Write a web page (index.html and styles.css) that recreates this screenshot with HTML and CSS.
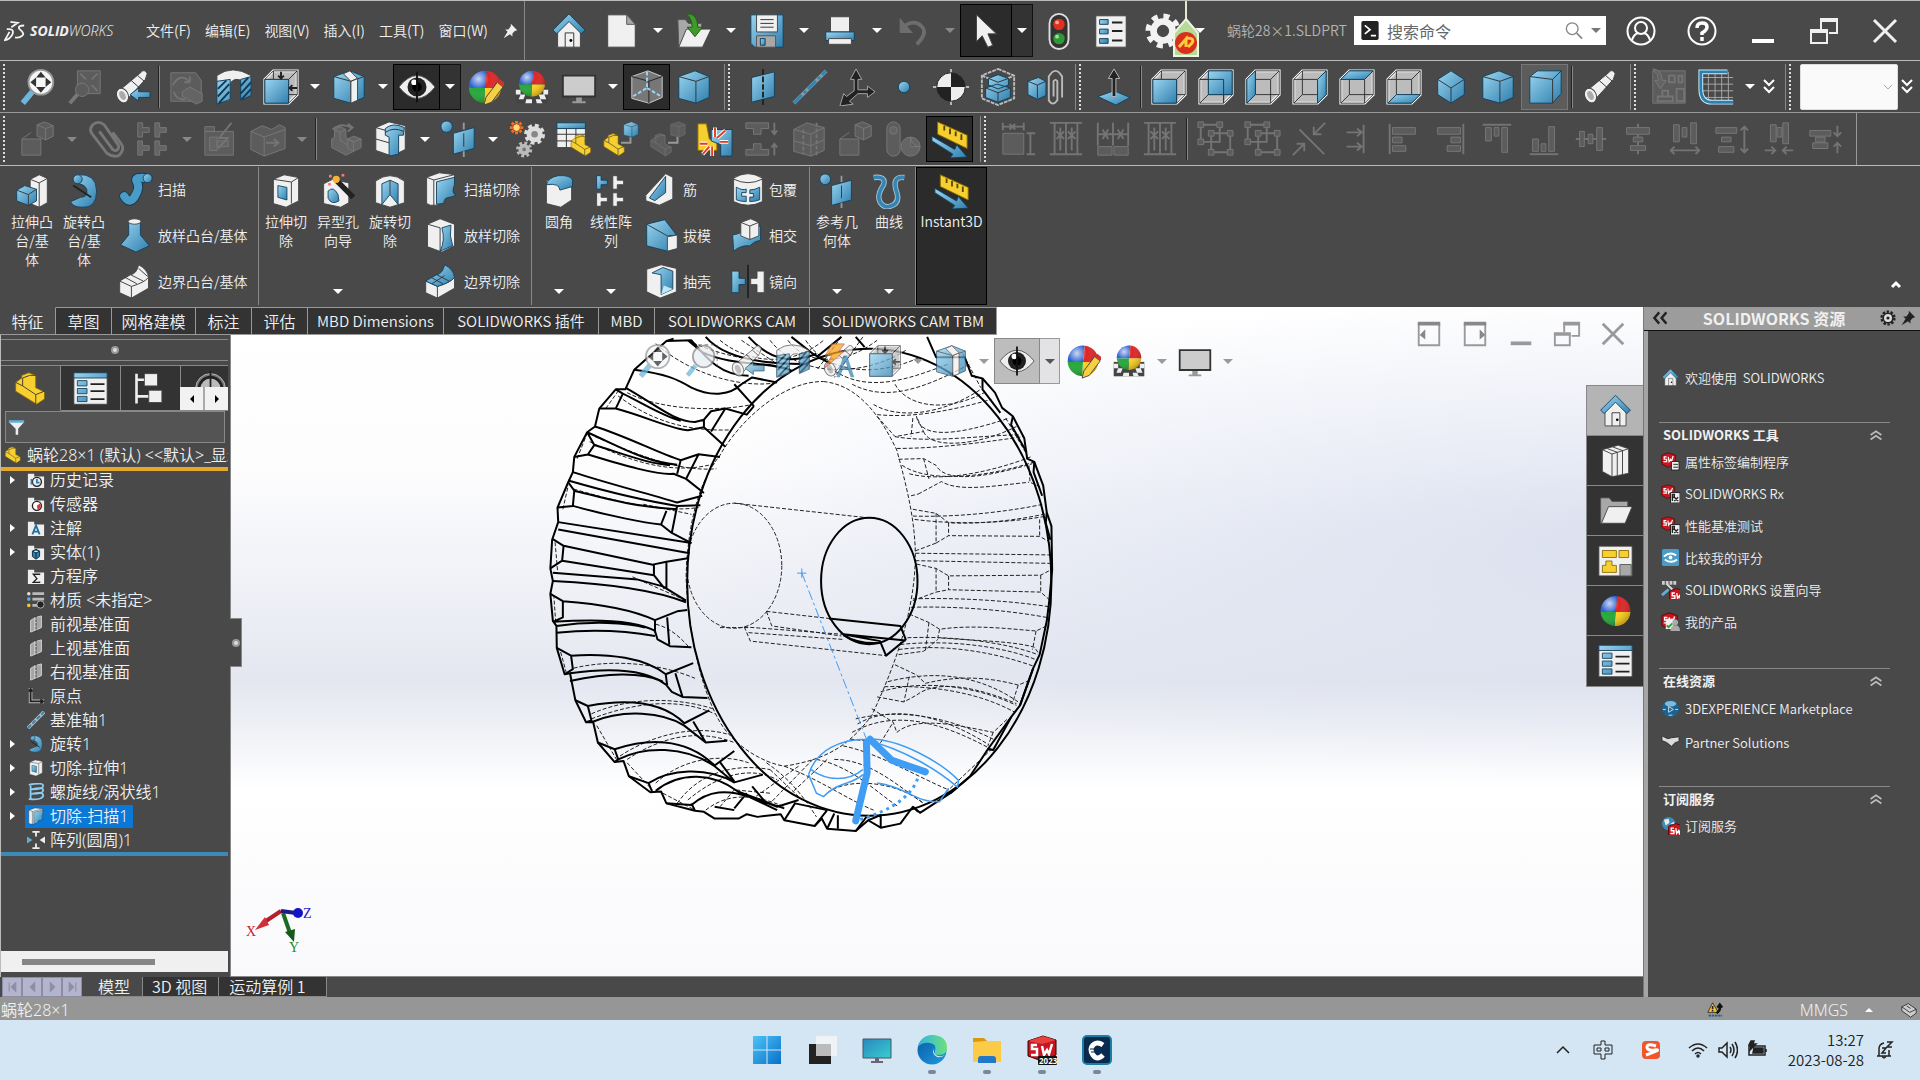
FILE: index.html
```html
<!DOCTYPE html>
<html lang="zh-CN">
<head>
<meta charset="utf-8">
<title>SOLIDWORKS</title>
<link rel="stylesheet" href="styles.css">
</head>
<body>
<svg class="defs" aria-hidden="true">
<defs>
<linearGradient id="gb" x1="0" y1="0" x2="1" y2="1"><stop offset="0" stop-color="#9bd5f0"/><stop offset="1" stop-color="#2f7fae"/></linearGradient>
<linearGradient id="edge" x1="0" y1="0" x2="1" y2="1"><stop offset="0" stop-color="#0c59a4"/><stop offset="1" stop-color="#1b9de2"/></linearGradient>
<linearGradient id="edge2" x1="0" y1="0" x2="1" y2="0"><stop offset="0" stop-color="#2fb5e8"/><stop offset="1" stop-color="#6be07b"/></linearGradient>
<linearGradient id="win" x1="0" y1="0" x2="1" y2="1"><stop offset="0" stop-color="#4cc3f7"/><stop offset="1" stop-color="#0a6fc9"/></linearGradient>
<linearGradient id="scr" x1="0" y1="0" x2="1" y2="1"><stop offset="0" stop-color="#2b87bd"/><stop offset="1" stop-color="#35d0d0"/></linearGradient>
<radialGradient id="shine" cx=".3" cy=".25" r=".8"><stop offset="0" stop-color="#fff" stop-opacity=".75"/><stop offset=".4" stop-color="#fff" stop-opacity="0"/><stop offset="1" stop-color="#000" stop-opacity=".25"/></radialGradient>
</defs>
<symbol id="home" viewBox="0 0 40 40"><path class="w" d="M8 20L20 8l12 12v17H8z"/><path class="b" d="M20 2l17 17-4 4L20 10 7 23l-4-4z"/><path class="n" d="M16 37V22h9v15"/><circle cx="22" cy="30" r="1.500"/></symbol>
<symbol id="new" viewBox="0 0 40 40"><path class="w" d="M6 3h20l9 10v24H6z"/><path class="g" d="M26 3v10h9z"/></symbol>
<symbol id="open" viewBox="0 0 40 40"><path class="g" d="M3 8h8l3 4h14v12L4 37z"/><path class="w" d="M12 18h26L29 37H4z"/><path fill="#3f9a2c" stroke="#1d5c12" d="M12 2q12-1 12 14h5l-8 10-8-10h5Q18 7 12 2z"/></symbol>
<symbol id="save" viewBox="0 0 40 40"><path class="b" d="M3 3h34v34H7l-4-4z"/><path class="w" d="M9 3h22v18H9z"/><path class="n" d="M13 8h14M13 12h14M13 16h14"/><path class="g" d="M9 25h20v12H9z"/><path class="b" d="M13 28h5v7h-5z"/></symbol>
<symbol id="print" viewBox="0 0 40 40"><path class="w" d="M10 5h20v16H10z"/><path class="b" d="M5 21h30v9H5z"/><path class="w" d="M8 28h24v6H8z"/></symbol>
<symbol id="undo" viewBox="0 0 40 40"><path fill="none" stroke="#6d6d6d" stroke-width="4" d="M12 14q10-6 17 1t-5 19"/><path fill="#6d6d6d" d="M6 6v16h14z"/></symbol>
<symbol id="cursor" viewBox="0 0 40 40"><path class="w" d="M10 3v28l6-6 6 12 5-2-5-12h9z"/></symbol>
<symbol id="traffic" viewBox="0 0 40 40"><rect x="10" y="2" width="20" height="37" rx="10" fill="#333" stroke="#ddd" stroke-width="2"/><circle cx="20" cy="13" r="6" fill="#e03020"/><circle cx="20" cy="28" r="6" fill="#2f9a35"/><circle cx="18" cy="11" r="2" fill="#ffa090"/><circle cx="18" cy="26" r="2" fill="#9fe0a0"/></symbol>
<symbol id="props" viewBox="0 0 40 40"><path class="w" d="M4 4h32v33H4z"/><path class="b" d="M8 8h9v5H8zM8 18h9v5H8zM8 28h9v5H8z"/><path class="k" d="M21 11h11M21 20h11M21 30h11"/></symbol>
<symbol id="propt" viewBox="0 0 40 40"><path class="w" d="M1 3h38v35H1z"/><path class="b" d="M1 2h38v6H1zM5 11h11v6H5zM5 20h11v6H5zM5 29h11v6H5z"/><path class="k" d="M20 15h16M20 23h16M20 32h16"/></symbol>
<symbol id="gear" viewBox="0 0 40 40"><circle cx="20" cy="20" r="15" fill="none" stroke="#f2f2f2" stroke-width="7" stroke-dasharray="6 5.780"/><circle cx="20" cy="20" r="10" fill="none" stroke="#f2f2f2" stroke-width="7"/></symbol>
<symbol id="lens" viewBox="0 0 40 40"><path stroke="#6db7dc" stroke-width="5" d="M14 25L5 36"/><circle cx="23" cy="15" r="12" fill="#e8eef4" stroke="#888" stroke-width="2"/><path fill="none" stroke="#444" stroke-dasharray="4 3" d="M17 2h21v24"/></symbol>
<symbol id="zoomfit" viewBox="0 0 40 40"><path stroke="#6db7dc" stroke-width="6" d="M14 25L4 37"/><circle cx="23" cy="15" r="13" fill="#f4f6f8" stroke="#999" stroke-width="2"/><path d="M23 4l5 6H18zM23 26l5-6H18zM12 15l6-5v10zM34 15l-6-5v10z" fill="#333"/></symbol>
<symbol id="zoomarea" viewBox="0 0 40 40"><path class="g" d="M12 3h24v24H12z"/><path d="M15 6l6 6m12-6l-6 6m6 12l-6-6" class="k"/><path class="n" stroke-width="4" d="M12 28L4 37"/><circle class="g" cx="17" cy="23" r="7"/></symbol>
<symbol id="scope" viewBox="0 0 40 40"><path class="w" d="M29 5q4-5 7 1l-2 6-19 21-10-8z"/><path class="n" d="M26 8l7 6M19 13l9 8"/><ellipse class="w" cx="10" cy="29" rx="6" ry="8" transform="rotate(-25 10 29)"/><ellipse cx="10" cy="29" rx="3" ry="5" fill="#aaa" transform="rotate(-25 10 29)"/></symbol>
<symbol id="prev" viewBox="0 0 40 40"><use href="#scope"/><path class="b" d="M18 28l9-7v4h12v6H27v4z"/></symbol>
<symbol id="rot" viewBox="0 0 40 40"><path class="g" d="M3 5h26l6 8v22H3z"/><path class="k" d="M5 18q8-14 18-3m0 0v-6m0 6h-6M6 25q3 9 12 8"/><path class="w" d="M15 25l8-5 13 7v8l-6 3-15-8z"/></symbol>
<symbol id="asmrot" viewBox="0 0 40 40"><path class="k" d="M8 10q9-8 20-2m-4-4l5 4-5 4"/><path class="w" d="M10 10l6-3 6 3v9l8 4v10l-8 4-15-8v-9l3-2zM24 20l6-3 8 3v9l-8 4-6-3z"/><path class="n" d="M10 10l6 3 6-3M16 13v8l7 5M24 20l6 3 8-3"/></symbol>
<symbol id="section" viewBox="0 0 40 40"><path class="w" d="M2 8Q18-4 38 8v21l-9-3V14q-8-5-13 2v18L2 38z"/><path class="b" d="M2 14l14-2v21L2 38zM27 12l11-3v20l-11 5z"/><path fill="none" stroke="#123c55" stroke-width="2" d="M3 22l9-9M3 30l12-13M4 37l11-12M27 19l8-9M27 27l11-12M28 33l10-11"/></symbol>
<symbol id="wire" viewBox="0 0 40 40"><path fill="#bcbcbc" stroke="#fff" stroke-width="3" d="M3 12l9-9h25v25l-9 9H3z"/><path class="n" d="M3 12h25v25H3zM12 3h25v25H12zM3 12l9-9M28 12l9-9M28 37l9-9M3 37l9-9"/></symbol>
<symbol id="vfront" viewBox="0 0 40 40"><use href="#wire"/><path class="b" d="M3 12h25v25H3z"/></symbol>
<symbol id="vback" viewBox="0 0 40 40"><use href="#wire"/><path class="b" d="M12 3h25v25H12z"/><path class="n" d="M3 12h25v25"/></symbol>
<symbol id="vleft" viewBox="0 0 40 40"><use href="#wire"/><path class="b" d="M3 12l9-9v25l-9 9z"/></symbol>
<symbol id="vright" viewBox="0 0 40 40"><use href="#wire"/><path class="b" d="M28 12l9-9v25l-9 9z"/></symbol>
<symbol id="vtop" viewBox="0 0 40 40"><use href="#wire"/><path class="b" d="M3 12l9-9h25l-9 9z"/></symbol>
<symbol id="vbot" viewBox="0 0 40 40"><use href="#wire"/><path class="b" d="M3 37l9-9h25l-9 9z"/></symbol>
<symbol id="orient" viewBox="0 0 40 40"><use href="#vfront"/><path class="k" d="M20 4v7m-3-3l3 3 3-3M37 21h-8m3-3l-3 3 3 3"/></symbol>
<symbol id="iso" viewBox="0 0 40 40"><path class="b" d="M20 3l14 9v16l-14 9-14-9V12z"/><path class="n" d="M6 12l14 9 14-9M20 21v16"/></symbol>
<symbol id="cube" viewBox="0 0 40 40"><path class="b" d="M4 9l17-6 15 6v22l-14 6L4 32z"/><path class="n" d="M4 9l18 5 14-5M22 14v23"/></symbol>
<symbol id="cube2" viewBox="0 0 40 40"><path class="b" d="M4 9l8-6h25v24l-9 10H4z"/><path class="n" d="M4 9l24 3 9-9M28 12v25"/></symbol>
<symbol id="shade" viewBox="0 0 40 40"><use href="#cube"/><path class="w" d="M22 14l7-3v23l-7 3zM14 6l7-3 8 8-7 3z"/></symbol>
<symbol id="eye" viewBox="0 0 40 40"><path fill="#eee" stroke="#555" d="M1 20Q20-4 39 20 20 44 1 20z"/><circle cx="20" cy="20" r="10" fill="#222"/><circle cx="20" cy="20" r="5"/><circle cx="17" cy="15" r="3" fill="#fff"/><path stroke="#111" stroke-width="2" d="M20 4v32"/></symbol>
<symbol id="ball" viewBox="0 0 40 40"><path fill="#2b60d0" d="M20 21H3A17 17 0 0 1 22 3z"/><path fill="#dd2526" d="M20 21L22 3a17 17 0 0 1 15 18z"/><path fill="#ffd21f" d="M20 21h17a17 17 0 0 1-18 16z"/><path fill="#24a838" d="M20 21l-1 16A17 17 0 0 1 3 21z"/><circle cx="20" cy="20" r="17" fill="url(#shine)"/></symbol>
<symbol id="appear" viewBox="0 0 40 40"><use href="#ball"/><path fill="#f5cf45" stroke="#444" d="M21 31L33 15l6 5-12 16-8 3z"/><path fill="#c33" d="M33 15l3-3 5 4-2 4z"/></symbol>
<symbol id="scene" viewBox="0 0 40 40"><path fill="#444" d="M3 21h34v16H3z"/><path fill="#eee" d="M3 23h5v5H3zM32 23h5v5h-5zM8 28h5l-2 5H6zM27 28h6l2 5h-6zM14 33h6v4h-7zM24 33h5l2 4h-6z"/><svg x="4" y="0" width="32" height="33"><use href="#ball"/></svg></symbol>
<symbol id="monitor" viewBox="0 0 40 40"><path fill="#ccc" stroke="#333" stroke-width="2" d="M3 8h34v22H3z"/><path fill="#999" d="M17 31h6v4h4v2H13v-2h4z"/></symbol>
<symbol id="hidden" viewBox="0 0 40 40"><path fill="#777" stroke="#ccc" d="M4 9l17-6 15 6v22l-14 6L4 32z"/><path fill="none" stroke="#222" d="M4 9l18 5 14-5M22 14v23"/><path fill="none" stroke="#9bd5f0" stroke-width="2" stroke-dasharray="4 2" d="M20 4v17L5 30m15-9l15 9"/></symbol>
<symbol id="plane" viewBox="0 0 40 40"><path class="b" d="M8 10l24-6v26L8 36z"/><path fill="none" stroke="#222" stroke-width="2" stroke-dasharray="6 2" d="M20 1v38"/></symbol>
<symbol id="axis" viewBox="0 0 40 40"><path stroke="#8a9aa4" stroke-width="4" d="M3 37L37 3"/><path stroke="#2d86b8" stroke-width="3" stroke-dasharray="12 3 3 3" d="M3 37L37 3"/></symbol>
<symbol id="coord" viewBox="0 0 40 40"><path d="M17 24V12h-4l6-11 6 11h-4v11h10v-4l8 6-8 6v-4H21l-9 8 4 3-14 2 4-13 3 3z" fill="#222" stroke="#aaa"/></symbol>
<symbol id="point" viewBox="0 0 40 40"><circle class="b" cx="20" cy="20" r="6"/></symbol>
<symbol id="com" viewBox="0 0 40 40"><path stroke="#bbb" stroke-width="2" d="M20 1v38M1 20h38"/><circle cx="20" cy="20" r="15" fill="#eee" stroke="#222"/><path d="M20 20V5a15 15 0 0 1 15 15zM20 20v15A15 15 0 0 1 5 20z" fill="#222"/></symbol>
<symbol id="bbox" viewBox="0 0 40 40"><path fill="none" stroke="#bbb" stroke-width="2" stroke-dasharray="4 1" d="M20 1l17 7v24l-17 7-17-7V8zM3 8l17 7 17-7"/><path class="b" d="M7 21l12-4 14 4v10l-13 5-13-5zM10 11l10-4 11 4v7l-11 4-10-4z"/><path class="n" d="M7 21l13 5 13-5M20 26v10M10 11l10 4 11-4"/></symbol>
<symbol id="clipc" viewBox="0 0 40 40"><path class="b" d="M2 14l11-4 8 4v15l-9 4-10-5z"/><path class="n" d="M2 14l10 4 9-4M12 18v14"/><path fill="none" stroke="#bbb" stroke-width="2" d="M29 30V14q2-3 4 0v20q-5 7-9 0V9q7-12 14 0v22"/></symbol>
<symbol id="normal" viewBox="0 0 40 40"><path class="b" d="M3 30l17-6 17 7-15 8z"/><path d="M18 30V11h-4l6-10 6 10h-4v19z" fill="#222" stroke="#bbb"/></symbol>
<symbol id="blk" viewBox="0 0 40 40"><path class="g" d="M3 3h34v34H3z"/><path class="k" d="M20 8h6v7h-6zM30 8h4v7h-4zM8 30h16v5H8zM13 24h6v6h-6zM28 22h8v13h-8z"/><path class="w" d="M3 1q9 0 10 12h4l-6 9-6-9h4q0-6-6-12z"/></symbol>
<symbol id="sketch" viewBox="0 0 40 40"><path fill="none" stroke="#aaa" d="M12 4v30M19 4v33M26 4v33M33 4v33M6 10h32M6 17h32M6 24h32M8 31h30"/><path fill="none" stroke="#ccecfb" stroke-width="5" d="M32 4H4v18q0 14 12 14h22"/><path fill="none" stroke="#2d7fae" stroke-width="3" d="M32 4H4v18q0 14 12 14h22"/></symbol>
<symbol id="asm" viewBox="0 0 40 40"><path class="b" d="M19 5l8-3 9 4v11l-8 4-9-4z"/><path class="n" d="M19 5l9 4 8-3M28 9v12"/><path class="g" d="M3 20h20v17H3zM3 20l10-7"/></symbol>
<symbol id="clip" viewBox="0 0 40 40"><path fill="none" stroke="#777" stroke-width="3" d="M13 12l14 19q4 3 6-1 1-3-1-5L18 5Q12 0 6 5q-4 5-1 9l16 21q7 5 13 2 6-6 2-12L27 13"/></symbol>
<symbol id="lin" viewBox="0 0 40 40"><path class="b" d="M4 3h5v5h7v5H9v5H4z"/><path class="w" d="M22 3h5v5h7v5h-7v5h-5zM4 22h5v5h7v5H9v5H4zM22 22h5v5h7v5h-7v5h-5z"/></symbol>
<symbol id="bolt" viewBox="0 0 40 40"><path class="g" d="M3 12h30v25H3zM3 7h10v5H3z"/><path class="w" d="M8 18h8v14H8zM16 22h12v6H16z"/><path class="k" d="M31 3L18 19h9L17 30"/></symbol>
<symbol id="box2" viewBox="0 0 40 40"><path class="g" d="M2 12l12-6 10 4 8-5 6 3v22l-22 8-14-7z"/><path class="n" d="M2 12l14 6 22-8M16 18v20"/><path class="k" d="M18 24h12m-4-4l5 4-5 4"/></symbol>
<symbol id="hole" viewBox="0 0 40 40"><path class="g" d="M4 10l14-7 18 5v24l-14 6-18-5z"/><path class="n" d="M4 10l18 5 14-7M22 15v23M4 22l18 5 14-6"/><path class="k" stroke-dasharray="4 2" d="M28 3v36M14 10v26"/></symbol>
<symbol id="step" viewBox="0 0 40 40"><path class="w" d="M4 8l14-6 17 4v25l-14 7-17-6z"/><path class="n" d="M4 20l14 4M4 8l14 4"/><path class="b" d="M14 9q8-7 20-1l-1 8h-5v20l-10 2V18l-4-2z"/><path class="n" d="M14 13q9-6 19-1"/></symbol>
<symbol id="refgeo" viewBox="0 0 40 40"><circle class="b" cx="7" cy="7" r="6"/><path class="b" d="M14 14l22-6v22l-22 6z"/><path stroke="#999" stroke-width="2" d="M25 3v7M25 33v6"/><path class="n" d="M25 14v14"/></symbol>
<symbol id="gears" viewBox="0 0 40 40"><path stroke="#e8762a" stroke-width="3" d="M9 1v14M2 8h14M4 3l10 10M14 3L4 13"/><circle cx="9" cy="8" r="4" fill="#ffd978" stroke="#b3401c"/><circle cx="28" cy="15" r="9" fill="none" stroke="#ddd" stroke-width="4" stroke-dasharray="4 3.070"/><circle cx="28" cy="15" r="6" fill="#888" stroke="#ddd" stroke-width="5"/><circle cx="17" cy="31" r="7" fill="none" stroke="#bbb" stroke-width="3" stroke-dasharray="3 2.500"/><circle cx="17" cy="31" r="4" fill="#777" stroke="#bbb" stroke-width="4"/></symbol>
<symbol id="part" viewBox="0 0 40 40"><path class="y" d="M3 13l7-5V5l8-3 8 3v14l10 5v8l-9 6L3 23z"/><path class="n" d="M3 13l8 4v-9l8-3M11 17l15 10 10-4M26 27v11M19 5l7 0"/></symbol>
<symbol id="tablep" viewBox="0 0 40 40"><path class="w" d="M2 3h30v26H2z"/><path class="b" d="M2 3h30v6H2z"/><path class="n" d="M2 15h30M2 22h30M12 9v20M22 9v20"/><svg x="15" y="13" width="25" height="27"><use href="#part"/></svg></symbol>
<symbol id="partc" viewBox="0 0 40 40"><svg x="0" y="12" width="26" height="28"><use href="#part"/></svg><path fill="none" stroke="#999" stroke-width="2" d="M20 24h10v-6"/><svg x="21" y="0" width="19" height="20"><use href="#cube"/></svg></symbol>
<symbol id="collide" viewBox="0 0 40 40"><path class="y" d="M2 4h9l3 16 8 4v8H2z"/><path class="b" d="M16 10h22v28H26V26l-10-4z"/><path stroke="#fff" stroke-width="4" fill="none" d="M20 18V8M22 19l9-8M25 23h9M17 28v10M14 28L7 36M12 25H4"/><path stroke="#e33a1f" stroke-width="2" fill="none" d="M20 18V8M22 19l9-8M25 23h9M17 28v10M14 28L7 36M12 25H4"/></symbol>
<symbol id="press" viewBox="0 0 40 40"><path class="g" d="M3 3h24v6h-8v6h-8V9H3zM3 37h24v-6h-8v-6h-8v6H3z"/><path class="k" d="M33 3v12m-3-4l3 4 3-4M33 37V25m-3 4l3-4 3 4"/></symbol>
<symbol id="balls" viewBox="0 0 40 40"><rect class="g" x="3" y="2" width="14" height="36" rx="7"/><circle class="w" cx="10" cy="11" r="4"/><circle class="w" cx="28" cy="28" r="10"/><path class="g" d="M28 18a10 10 0 0 0 10 10H28z"/></symbol>
<symbol id="ruler" viewBox="0 0 40 40"><path fill="#f6d02f" stroke="#8a6a00" d="M7 2l31 14v14L7 15z"/><path stroke="#5b4600" stroke-width="2" d="M14 6v5M20 9v6M26 12v5M32 15v6"/><path class="b" d="M1 17l24 14 2-5 11 13-18 1 3-4L1 22z"/></symbol>
<symbol id="d1" viewBox="0 0 40 40"><path class="g" d="M3 14h22v22H3z"/><path class="k" d="M3 3v8M25 3v8M4 7h20M28 14h9M28 36h9M32 15v20M10 4l6 6M16 4l-6 6"/></symbol>
<symbol id="d2" viewBox="0 0 40 40"><path class="k" d="M3 3h34M8 3v34M14 8v24M20 3v34M26 8v24M32 3v34M10 12l8 8M22 12l8 8M18 12l-8 8M30 12l-8 8M3 36h34"/></symbol>
<symbol id="d3" viewBox="0 0 40 40"><path class="g" d="M4 28h15v9H4zM21 28h15v9H21z"/><path class="k" d="M4 3v24M20 3v24M36 3v24M5 15h14M21 15h14M9 10l6 10M15 10L9 20M25 10l6 10M31 10l-6 10"/></symbol>
<symbol id="grp" viewBox="0 0 40 40"><path class="k" d="M5 5h20v18H5zM16 14h20v20H16z"/><path class="g" d="M2 2h6v6H2zM22 2h6v6h-6zM2 20h6v6H2zM13 11h6v6h-6zM33 11h6v6h-6zM33 31h6v6h-6zM13 31h6v6h-6z"/></symbol>
<symbol id="trim" viewBox="0 0 40 40"><path class="k" stroke-width="3" d="M10 10l26 26M37 3L25 15m0-8v8h8M3 37l12-12m0 8v-8H7"/></symbol>
<symbol id="alx" viewBox="0 0 40 40"><path class="k" d="M28 5v30M10 13h16m-5-4l5 4-5 4M10 28h16m-5-4l5 4-5 4"/></symbol>
<symbol id="all" viewBox="0 0 40 40"><path class="k" d="M6 4v32"/><path class="g" d="M9 8h24v7H9zM9 18h10v6H9zM9 27h14v6H9z"/></symbol>
<symbol id="alr" viewBox="0 0 40 40"><path class="k" d="M34 4v32"/><path class="g" d="M7 8h24v7H7zM21 18h10v6H21zM17 27h14v6H17z"/></symbol>
<symbol id="alt" viewBox="0 0 40 40"><path class="k" d="M5 5h30"/><path class="g" d="M8 8h6v14H8zM17 8h5v9h-5zM25 8h6v26h-6z"/></symbol>
<symbol id="alb" viewBox="0 0 40 40"><path class="k" d="M5 36h30"/><path class="g" d="M8 20h6v13H8zM17 25h5v8h-5zM25 7h6v26h-6z"/></symbol>
<symbol id="alm" viewBox="0 0 40 40"><path class="k" d="M4 20h32"/><path class="g" d="M8 12h5v16H8zM17 15h5v10h-5zM26 8h6v24h-6z"/></symbol>
<symbol id="alc" viewBox="0 0 40 40"><path class="k" d="M20 4v32"/><path class="g" d="M8 8h24v7H8zM15 18h10v5H15zM12 27h16v5H12z"/></symbol>
<symbol id="dh" viewBox="0 0 40 40"><path class="g" d="M8 5h6v18H8zM17 8h5v10h-5zM26 3h6v22h-6z"/><path class="k" d="M5 32h30m-4-4l4 4-4 4M9 28l-4 4 4 4"/></symbol>
<symbol id="dv" viewBox="0 0 40 40"><path class="g" d="M3 8h22v6H3zM9 18h10v5H9zM6 28h16v6H6z"/><path class="k" d="M33 7v27m-4-4l4 4 4-4M29 11l4-4 4 4"/></symbol>
<symbol id="ch" viewBox="0 0 40 40"><path class="g" d="M11 5h6v18h-6zM18 8h5v10h-5zM24 3h6v22h-6z"/><path class="k" d="M5 32h11m-4-4l4 4-4 4M35 32H24m4-4l-4 4 4 4"/></symbol>
<symbol id="cv" viewBox="0 0 40 40"><path class="g" d="M3 11h22v6H3zM9 18h10v5H9zM6 24h16v6H6z"/><path class="k" d="M32 6v11m-4-4l4 4 4-4M32 35V24m-4 4l4-4 4 4"/></symbol>
<symbol id="boss" viewBox="0 0 40 40"><path class="w" d="M18 7l10-5 9 4v27l-9 5-10-4z"/><path class="n" d="M18 7l10 4 9-5M28 11v27"/><path class="b" d="M3 19l9-5 13 4v13l-9 5-13-5z"/><path class="n" d="M3 19l13 5 9-6M16 24v12"/></symbol>
<symbol id="revolve" viewBox="0 0 40 40"><path class="b" d="M12 2q22-2 22 18T17 38Q8 38 5 32l11-5q9 0 7-9-2-5-8-6z"/><ellipse class="b" cx="13" cy="7" rx="5" ry="5"/><path class="k" d="M8 14l20 13"/></symbol>
<symbol id="sweep" viewBox="0 0 40 40"><path fill="none" stroke="#17384d" stroke-width="11" stroke-linecap="round" d="M8 28q6 10 12 0t2-16 12-4"/><path fill="none" stroke="#4a9cc8" stroke-width="9" stroke-linecap="round" d="M8 28q6 10 12 0t2-16 12-4"/><circle class="b" cx="34" cy="8" r="5"/></symbol>
<symbol id="loft" viewBox="0 0 40 40"><path class="b" d="M13 5h13v15l10 12-15 7L4 31l9-11z"/><ellipse class="w" cx="19.500" cy="5" rx="7" ry="3"/></symbol>
<symbol id="bound" viewBox="0 0 40 40"><path class="w" d="M3 20l12-7Q22 12 24 2q10 5 11 14v12L16 39 3 33z"/><path class="n" d="M3 20l13 6q14-4 19-10M16 26v13M9 16l13 7M15 13l14 7M24 6l10 9"/></symbol>
<symbol id="boundc" viewBox="0 0 40 40"><use href="#bound"/><path class="b" d="M3 20l12-7Q22 12 24 2q10 5 11 14-5 6-19 10z"/><path class="n" d="M9 16l13 7M15 13l14 7M10 23l14-9"/></symbol>
<symbol id="cutex" viewBox="0 0 40 40"><path class="w" d="M6 7l12-5 16 3v26l-14 7-14-4z"/><path class="n" d="M6 7l20 3 8-5M26 10v24"/><path class="b" d="M11 14l10 2v14l-10-3z"/></symbol>
<symbol id="wizard" viewBox="0 0 40 40"><path class="w" d="M4 12l10-5 18 4v22l-9 5-19-4z"/><path class="b" d="M9 20q6-6 11 4l1 7q-8 5-12-3z"/><path stroke="#222" stroke-width="6" d="M19 9l18 18"/><circle cx="18" cy="7" r="4" fill="#f9b233"/><path fill="#f77" d="M10 2h3v3h-3zM24 1h3v3h-3zM9 11h3v3H9z"/></symbol>
<symbol id="cutrev" viewBox="0 0 40 40"><path class="w" d="M4 9q16-12 32 0v24l-16 5-16-5z"/><path class="b" d="M11 12l9-4 9 4v23l-9-11-9 11z"/><path class="n" d="M20 8v16"/></symbol>
<symbol id="cutsw" viewBox="0 0 40 40"><path class="w" d="M4 7l14-5 17 2v10q-12 2-11 20l-9 4H8l-4-2z"/><path class="n" d="M4 7l8 3v28M12 10l23-6"/><path class="b" d="M15 12l20-5v8q-4 10 2 12l-6 2q-8 0-8 7l-8 1z"/></symbol>
<symbol id="cutlo" viewBox="0 0 40 40"><path class="w" d="M5 8l14-6 16 6v24l-14 7-16-6z"/><path class="n" d="M5 8l14 4v26"/><path class="b" d="M21 12l10-3q-2 12 2 23l-14 6q6-12 2-26z"/></symbol>
<symbol id="fillet" viewBox="0 0 40 40"><path class="w" d="M6 9q10-8 28-4v25l-12 8-16-4z"/><path class="b" d="M6 13Q8 5 19 3q14-1 16 5v7l-14 4q0-8-15-6z"/></symbol>
<symbol id="rib" viewBox="0 0 40 40"><path class="w" d="M2 27l22-24 8 4v24l-15 7-15-5z"/><path class="b" d="M6 30L24 6v18L12 33z"/></symbol>
<symbol id="draft" viewBox="0 0 40 40"><path class="b" d="M3 8l20-5 14 18v14l-11 3-23-6z"/><path class="n" d="M3 8l23 13 11-1"/><path class="w" d="M26 22l11-2v15l-11 3z"/></symbol>
<symbol id="shell" viewBox="0 0 40 40"><path class="w" d="M3 7l16-5 17 4v26l-18 7-15-7z"/><path class="b" d="M9 11l12-6 11 4v20l-13 6V13z"/><path fill="#bfe6f6" d="M19 35l13-6-10-4z"/></symbol>
<symbol id="wrap" viewBox="0 0 40 40"><path class="w" d="M4 8q16-10 32 0v26q-16 8-32 0z"/><path class="n" d="M4 9q16 8 32 0"/><path class="b" d="M7 18q7 4 11 2v4h-5v4h5v6q-6 0-11-2zM33 18q-5 3-11 3v4h4v4h-4v5q6 0 11-2z"/></symbol>
<symbol id="inter" viewBox="0 0 40 40"><path class="b" d="M3 20q12-2 16-8l15-2v16q-6 0-12 6-10-1-18 6z"/><path class="w" d="M12 6l11-4 9 4v15l-10 4-10-4z"/><path class="n" d="M12 6l10 4 10-4M22 10v15"/></symbol>
<symbol id="mirror" viewBox="0 0 40 40"><path class="b" d="M2 9h8v8h7v7h-7v9H2z"/><path class="w" d="M38 9h-8v8h-7v7h7v9h8z"/><path class="k" d="M20 2v37"/></symbol>
<symbol id="curve" viewBox="0 0 40 40"><path fill="none" stroke="#a9c3d1" stroke-width="6" d="M3 5q14-2 11 8-8 12-4 19 4 7 11 5 11-3 8-14Q22 3 37 5"/><path fill="none" stroke="#3585b4" stroke-width="4" d="M3 5q14-2 11 8-8 12-4 19 4 7 11 5 11-3 8-14Q22 3 37 5"/></symbol>
<symbol id="tree" viewBox="0 0 40 40"><path fill="none" stroke="#eee" stroke-width="3" d="M4 3v34M4 10h10M4 29h14"/><path class="w" d="M13 3h15v14H13zM18 22h15v14H18z"/></symbol>
<symbol id="target" viewBox="0 0 40 40"><circle cx="20" cy="20" r="17" fill="#777" stroke="#bbb"/><circle cx="20" cy="20" r="13" fill="#bbb" stroke="#222" stroke-width="3"/><path class="k" d="M20 0v40M3 20h34"/></symbol>
<symbol id="books" viewBox="0 0 40 40"><path class="w" d="M5 7l18-5 12 4v28l-19 4-11-6z"/><path class="n" d="M5 7l11 5 19-6M16 12v26M22 10v26M28 8v27M11 6l11 4M17 4l11 4"/></symbol>
<symbol id="folder" viewBox="0 0 40 40"><path class="g" d="M3 5h10l3 4h18v8L5 34H3z"/><path class="w" d="M12 15h27l-8 19H4z"/></symbol>
<symbol id="pal" viewBox="0 0 40 40"><path class="w" d="M1 3h38v34H1z"/><path class="y" d="M5 8h16v8H5zM24 8h11v8H24zM5 25h4v-5h7v5h5v8H5z"/><path class="g" d="M25 24h13v13H25z"/></symbol>
<symbol id="funnel" viewBox="0 0 20 20"><path fill="#eee" d="M1 4h18l-7 8v7H9v-7z"/><path fill="#5fb0d8" d="M1 2h18v3H1z"/></symbol>
<symbol id="fold" viewBox="0 0 20 20"><path fill="#eee" d="M1 3h7v3h11v13H1z"/></symbol>
<symbol id="sw" viewBox="0 0 20 20"><path fill="#c9151e" stroke="#5c060a" d="M1 4l8-3 9 3v10l-9 5-8-4z"/><path fill="none" stroke="#fff" stroke-width="1.500" d="M7 6H4v3h3v3H3M9 6l1 6 2-3 1 3 2-7"/></symbol>
<symbol id="swn" viewBox="0 0 20 20"><svg width="17" height="17"><use href="#sw"/></svg><path fill="#eee" stroke="#222" d="M11 10h8v9h-8z"/><path stroke="#222" d="M13 13h5M13 16h5"/></symbol>
<symbol id="swr" viewBox="0 0 20 20"><svg width="16" height="16"><use href="#sw"/></svg><path fill="#eee" stroke="#222" d="M10 9h10v11H10z"/><path fill="none" stroke="#222" stroke-width="1.500" d="M12 18v-7h2v3h-2m2 0l4 4m0-4l-4 4"/></symbol>
<symbol id="up2" viewBox="0 0 20 20"><path fill="none" stroke="#bbb" stroke-width="2" d="M4 11l6-4 6 4M4 16l6-4 6 4"/></symbol>
<symbol id="pin" viewBox="0 0 20 20"><path fill="currentColor" d="M11 1l8 8-3 1-3 3v4l-3-3-8 5 5-8-3-3h4l3-4z"/></symbol>
<symbol id="rest" viewBox="0 0 30 30"><path fill="none" stroke="currentColor" stroke-width="2" d="M12 13V4h16v13h-8M2 15h16v12H2z"/><path stroke="currentColor" stroke-width="4" d="M11 4h18M1 15h18"/></symbol>
<symbol id="x" viewBox="0 0 30 30"><path stroke="currentColor" stroke-width="3" d="M4 4l22 22M26 4L4 26"/></symbol>
</svg>

<header class="title">
 <div class="logo"><svg viewBox="0 0 24 24"><path fill="none" stroke="#f2f2f2" stroke-width="2" d="M7 2l8 1-7 5M3 10q9-1 6 6-3 5-8 6l5-9M22 6q-8 0-5 4 6 5 3 7-3 3-8 2"/></svg><span><b>SOLID</b>WORKS</span></div>
 <nav class="menus"><a href="#">文件(F)</a><a href="#">编辑(E)</a><a href="#">视图(V)</a><a href="#">插入(I)</a><a href="#">工具(T)</a><a href="#">窗口(W)</a><svg class="i16"><use href="#pin"/></svg></nav>
 <div class="quick">
  <button class="tb" aria-label="主页"><svg><use href="#home"/></svg></button>
  <button class="tb" aria-label="新建"><svg><use href="#new"/></svg></button><button class="dd" aria-label="更多"></button>
  <button class="tb" aria-label="打开"><svg><use href="#open"/></svg></button><button class="dd" aria-label="更多"></button>
  <button class="tb" aria-label="保存"><svg><use href="#save"/></svg></button><button class="dd" aria-label="更多"></button>
  <button class="tb" aria-label="打印"><svg><use href="#print"/></svg></button><button class="dd" aria-label="更多"></button>
  <button class="tb" aria-label="撤销"><svg><use href="#undo"/></svg></button><button class="dd off" aria-label="更多"></button>
  <button class="tb on" aria-label="选择"><svg><use href="#cursor"/></svg></button><button class="dd on2" aria-label="更多"></button>
  <button class="tb" aria-label="重建"><svg><use href="#traffic"/></svg></button>
  <button class="tb" aria-label="文件属性"><svg><use href="#props"/></svg></button>
  <button class="tb" aria-label="选项"><svg><use href="#gear"/></svg></button><button class="dd" aria-label="更多"></button>
  <svg class="tag" viewBox="0 0 28 56"><path stroke="#e8e8c8" stroke-width="2" d="M14 0v24"/><path fill="#b7d99a" stroke="#eef5e0" stroke-width="2" d="M14 18l12 14v23H2V32z"/><circle cx="14" cy="42" r="11" fill="#d8301c"/><path fill="none" stroke="#ffc93c" stroke-width="3" d="M7 46l7-8v8M15 37q8 0 5 5l-4 4"/></svg>
 </div>
 <span class="doc">蜗轮28×1.SLDPRT</span>
 <label class="search"><svg viewBox="0 0 20 22"><rect width="20" height="22" rx="2" fill="#222"/><path fill="none" stroke="#fff" stroke-width="2" d="M4 5l6 5-6 5M11 17h6"/></svg><input type="text" placeholder="搜索命令" aria-label="搜索命令"><svg viewBox="0 0 20 20"><circle cx="8" cy="8" r="6.500" fill="none" stroke="#888" stroke-width="1.500"/><path stroke="#888" stroke-width="2" d="M13 13l6 6"/></svg><i class="tri"></i></label>
 <div class="win">
  <button aria-label="用户"><svg viewBox="0 0 30 30"><g fill="none" stroke="#fff" stroke-width="2"><circle cx="15" cy="15" r="13.500"/><circle cx="15" cy="12" r="6"/><path d="M6 24q2-6 6-7M24 24q-2-6-6-7"/></g></svg></button>
  <button aria-label="帮助"><svg viewBox="0 0 30 30"><g fill="none" stroke="#fff" stroke-width="2"><circle cx="15" cy="15" r="13.500"/><path stroke-width="3.500" d="M10 12q0-5 5-5t5 4q0 3-5 6v2M15 21v4"/></g></svg></button>
  <button aria-label="最小化"><svg viewBox="0 0 30 30"><path stroke="#fff" stroke-width="4" d="M4 25h22"/></svg></button>
  <button aria-label="还原"><svg><use href="#rest"/></svg></button>
  <button aria-label="关闭"><svg><use href="#x"/></svg></button>
 </div>
</header>

<div class="bar">
 <i class="grip first"></i>
 <button class="tb" aria-label="整屏显示"><svg><use href="#zoomfit"/></svg></button><button class="tb dim" aria-label="局部放大"><svg><use href="#zoomarea"/></svg></button><button class="tb" aria-label="上一视图"><svg><use href="#prev"/></svg></button><i class="sep"></i>
 <button class="tb dim" aria-label="旋转"><svg><use href="#rot"/></svg></button><button class="tb" aria-label="剖面"><svg><use href="#section"/></svg></button><button class="tb" aria-label="视图定向"><svg><use href="#orient"/></svg></button><button class="dd" aria-label="更多"></button>
 <button class="tb" aria-label="显示样式"><svg><use href="#shade"/></svg></button><button class="dd" aria-label="更多"></button>
 <button class="tb on" aria-label="隐藏显示"><svg><use href="#eye"/></svg></button><button class="dd on2" aria-label="更多"></button>
 <button class="tb" aria-label="外观"><svg><use href="#appear"/></svg></button><button class="tb" aria-label="布景"><svg><use href="#scene"/></svg></button><button class="tb" aria-label="视图设定"><svg><use href="#monitor"/></svg></button><button class="dd" aria-label="更多"></button>
 <button class="tb on" aria-label="隐藏线"><svg><use href="#hidden"/></svg></button><button class="tb" aria-label="上色"><svg><use href="#cube"/></svg></button>
 <i class="grip"></i>
 <button class="tb" aria-label="基准面"><svg><use href="#plane"/></svg></button><button class="tb" aria-label="基准轴"><svg><use href="#axis"/></svg></button><button class="tb" aria-label="坐标系"><svg><use href="#coord"/></svg></button><button class="tb" aria-label="点"><svg><use href="#point"/></svg></button><button class="tb" aria-label="质心"><svg><use href="#com"/></svg></button><button class="tb" aria-label="边界框"><svg><use href="#bbox"/></svg></button><button class="tb" aria-label="配合参考"><svg><use href="#clipc"/></svg></button>
 <i class="grip"></i>
 <button class="tb" aria-label="正视于"><svg><use href="#normal"/></svg></button><i class="sep"></i>
 <button class="tb" aria-label="前视"><svg><use href="#vfront"/></svg></button><button class="tb" aria-label="后视"><svg><use href="#vback"/></svg></button><button class="tb" aria-label="左视"><svg><use href="#vleft"/></svg></button><button class="tb" aria-label="右视"><svg><use href="#vright"/></svg></button><button class="tb" aria-label="上视"><svg><use href="#vtop"/></svg></button><button class="tb" aria-label="下视"><svg><use href="#vbot"/></svg></button><button class="tb" aria-label="等轴测"><svg><use href="#iso"/></svg></button><button class="tb" aria-label="左右二等角"><svg><use href="#cube"/></svg></button><button class="tb soft" aria-label="上下二等角"><svg><use href="#cube2"/></svg></button><i class="sep"></i>
 <button class="tb" aria-label="视图选择器"><svg><use href="#scope"/></svg></button>
 <i class="grip"></i>
 <button class="tb dim" aria-label="块"><svg><use href="#blk"/></svg></button><button class="tb" aria-label="草图"><svg><use href="#sketch"/></svg></button><button class="dd" aria-label="更多"></button><svg class="more" viewBox="0 0 18 24"><path d="M4 5l5 5 5-5M4 12l5 5 5-5"/></svg>
 <i class="grip"></i>
 <select class="combo" aria-label="图层"><option></option></select><svg class="more" viewBox="0 0 18 24"><path d="M4 5l5 5 5-5M4 12l5 5 5-5"/></svg>
</div>

<div class="bar second">
 <i class="grip first"></i>
 <button class="tb dim" aria-label="插入零部件"><svg><use href="#asm"/></svg></button><button class="dd off" aria-label="更多"></button><button class="tb dim" aria-label="配合"><svg><use href="#clip"/></svg></button><button class="tb dim" aria-label="阵列"><svg><use href="#lin"/></svg></button><button class="dd off" aria-label="更多"></button><button class="tb dim" aria-label="智能扣件"><svg><use href="#bolt"/></svg></button><button class="tb dim" aria-label="移动"><svg><use href="#box2"/></svg></button><button class="dd off" aria-label="更多"></button><i class="sep"></i>
 <button class="tb dim" aria-label="显示隐藏"><svg><use href="#asmrot"/></svg></button><button class="tb" aria-label="装配体特征"><svg><use href="#step"/></svg></button><button class="dd" aria-label="更多"></button><button class="tb" aria-label="参考几何体"><svg><use href="#refgeo"/></svg></button><button class="dd" aria-label="更多"></button>
 <button class="tb" aria-label="运动算例"><svg><use href="#gears"/></svg></button><button class="tb" aria-label="明细表"><svg><use href="#tablep"/></svg></button><button class="tb" aria-label="爆炸视图"><svg><use href="#partc"/></svg></button><button class="tb dim" aria-label="爆炸草图"><svg><use href="#partc"/></svg></button><button class="tb" aria-label="干涉检查"><svg><use href="#collide"/></svg></button><button class="tb dim" aria-label="间隙"><svg><use href="#press"/></svg></button><button class="tb dim" aria-label="孔对齐"><svg><use href="#hole"/></svg></button><button class="tb dim" aria-label="直观化"><svg><use href="#asm"/></svg></button><button class="tb dim" aria-label="性能"><svg><use href="#balls"/></svg></button><button class="tb on" aria-label="Instant3D"><svg><use href="#ruler"/></svg></button>
 <i class="grip"></i>
 <button class="tb dim" aria-label="尺寸"><svg><use href="#d1"/></svg></button><button class="tb dim" aria-label="均匀"><svg><use href="#d2"/></svg></button><button class="tb dim" aria-label="共线"><svg><use href="#d3"/></svg></button><button class="tb dim" aria-label="交错"><svg><use href="#d2"/></svg></button><i class="sep"></i>
 <button class="tb dim" aria-label="组合"><svg><use href="#grp"/></svg></button><button class="tb dim" aria-label="解散"><svg><use href="#grp"/></svg></button><button class="tb dim" aria-label="对齐"><svg><use href="#trim"/></svg></button><button class="tb dim" aria-label="对齐边"><svg><use href="#alx"/></svg></button><button class="tb dim" aria-label="左对齐"><svg><use href="#all"/></svg></button><button class="tb dim" aria-label="右对齐"><svg><use href="#alr"/></svg></button><button class="tb dim" aria-label="上对齐"><svg><use href="#alt"/></svg></button><button class="tb dim" aria-label="下对齐"><svg><use href="#alb"/></svg></button><button class="tb dim" aria-label="水平对齐"><svg><use href="#alm"/></svg></button><button class="tb dim" aria-label="竖直对齐"><svg><use href="#alc"/></svg></button><button class="tb dim" aria-label="水平均匀"><svg><use href="#dh"/></svg></button><button class="tb dim" aria-label="竖直均匀"><svg><use href="#dv"/></svg></button><button class="tb dim" aria-label="水平紧密"><svg><use href="#ch"/></svg></button><button class="tb dim" aria-label="竖直紧密"><svg><use href="#cv"/></svg></button>
 <i class="end"></i>
</div>

<div class="ribbon">
 <section>
  <button class="big"><svg><use href="#boss"/></svg><span>拉伸凸台/基体</span></button>
  <button class="big"><svg><use href="#revolve"/></svg><span>旋转凸台/基体</span></button>
  <div class="col w148"><button><svg><use href="#sweep"/></svg>扫描</button><button><svg><use href="#loft"/></svg>放样凸台/基体</button><button><svg><use href="#bound"/></svg>边界凸台/基体</button></div>
 </section>
 <section>
  <button class="big"><svg><use href="#cutex"/></svg><span>拉伸切除</span></button>
  <button class="big"><svg><use href="#wizard"/></svg><span>异型孔向导</span><i class="tri"></i></button>
  <button class="big"><svg><use href="#cutrev"/></svg><span>旋转切除</span></button>
  <div class="col w115"><button><svg><use href="#cutsw"/></svg>扫描切除</button><button><svg><use href="#cutlo"/></svg>放样切除</button><button><svg><use href="#boundc"/></svg>边界切除</button></div>
 </section>
 <section>
  <button class="big"><svg><use href="#fillet"/></svg><span>圆角</span><i class="tri"></i></button>
  <button class="big"><svg><use href="#lin"/></svg><span>线性阵列</span><i class="tri"></i></button>
  <div class="col w86"><button><svg><use href="#rib"/></svg>筋</button><button><svg><use href="#draft"/></svg>拔模</button><button><svg><use href="#shell"/></svg>抽壳</button></div>
  <div class="col w86"><button><svg><use href="#wrap"/></svg>包覆</button><button><svg><use href="#inter"/></svg>相交</button><button><svg><use href="#mirror"/></svg>镜向</button></div>
 </section>
 <section>
  <button class="big"><svg><use href="#refgeo"/></svg><span>参考几何体</span><i class="tri"></i></button>
  <button class="big"><svg><use href="#curve"/></svg><span>曲线</span><i class="tri"></i></button>
 </section>
 <button class="big instant"><svg><use href="#ruler"/></svg><span>Instant3D</span></button>
 <button class="fold" aria-label="折叠"><svg viewBox="0 0 14 14"><path fill="none" stroke="#fff" stroke-width="3" d="M3 10l4-4 4 4"/></svg></button>
</div>

<main class="work">
 <nav class="tabs"><a class="t56 cur" href="#">特征</a><a class="t56" href="#">草图</a><a class="t84" href="#">网格建模</a><a class="t56" href="#">标注</a><a class="t56" href="#">评估</a><a class="t136 lat" href="#">MBD Dimensions</a><a class="t154 lat" href="#">SOLIDWORKS 插件</a><a class="t56 lat" href="#">MBD</a><a class="t154 lat" href="#">SOLIDWORKS CAM</a><a class="t188 lat" href="#">SOLIDWORKS CAM TBM</a></nav>

 <aside class="left">
  <div class="handle"><i class="knob"></i></div>
  <div class="ptabs"><button class="cur" aria-label="设计树"><svg><use href="#part"/></svg></button><button aria-label="属性"><svg><use href="#propt"/></svg></button><button aria-label="配置"><svg><use href="#tree"/></svg></button><button aria-label="尺寸专家"><svg><use href="#target"/></svg></button><span class="pscroll"><button aria-label="左"><svg viewBox="0 0 10 10"><path d="M7 1v8L3 5z"/></svg></button><button aria-label="右"><svg viewBox="0 0 10 10"><path d="M3 1v8l4-4z"/></svg></button></span></div>
  <label class="filter"><svg><use href="#funnel"/></svg><input type="text" aria-label="过滤"></label>
  <div class="root"><svg><use href="#part"/></svg>蜗轮28×1 (默认) &lt;&lt;默认&gt;_显示状态</div>
  <ul class="tree">
   <li class="ex"><svg viewBox="0 0 20 20"><use href="#fold"/><circle cx="11" cy="12" r="5" fill="none" stroke="#222" stroke-width="1.500"/><path fill="none" stroke="#2d7fae" stroke-width="2" d="M5 15V9M11 9v4h3"/></svg><span>历史记录</span></li>
   <li><svg viewBox="0 0 20 20"><use href="#fold"/><circle cx="11" cy="12" r="5" fill="#fff" stroke="#222" stroke-width="1.500"/><path fill="#d33" d="M11 12l4-3v5l-3 3z"/></svg><span>传感器</span></li>
   <li class="ex"><svg viewBox="0 0 20 20"><use href="#fold"/><path fill="none" stroke="#1d6f9e" stroke-width="2" d="M6 17l4-10 4 10M8 14h5"/></svg><span>注解</span></li>
   <li class="ex"><svg viewBox="0 0 20 20"><use href="#fold"/><path fill="#2d7fae" stroke="#123" d="M10 7l4 2v6l-4 3-4-3V9zM6 9l4 2 4-2M10 11v6"/></svg><span>实体(1)</span></li>
   <li><svg viewBox="0 0 20 20"><use href="#fold"/><path fill="none" stroke="#222" stroke-width="1.500" d="M14 9V8H7l4 5-4 4h7v-1"/></svg><span>方程序</span></li>
   <li><svg viewBox="0 0 20 20"><circle cx="2" cy="3" r="2" fill="#ddd"/><circle cx="2" cy="9" r="2" fill="#5fb0d8"/><circle cx="2" cy="16" r="2" fill="#f3c62c"/><path stroke="#bbb" stroke-width="3" d="M6 3h13M6 9h13M6 16h6"/><circle cx="15" cy="15" r="4" fill="#222" stroke="#bbb"/></svg><span>材质 &lt;未指定&gt;</span></li>
   <li><svg viewBox="0 0 20 20"><path fill="#a5a5a5" stroke="#ddd" d="M4 6l5-3v14l-5 2zM9 3l7-2v13l-7 3z"/><path stroke="#333" stroke-dasharray="3 1" d="M10 1v18"/></svg><span>前视基准面</span></li>
   <li><svg viewBox="0 0 20 20"><path fill="#a5a5a5" stroke="#ddd" d="M4 6l5-3v14l-5 2zM9 3l7-2v13l-7 3z"/><path stroke="#333" stroke-dasharray="3 1" d="M10 1v18"/></svg><span>上视基准面</span></li>
   <li><svg viewBox="0 0 20 20"><path fill="#a5a5a5" stroke="#ddd" d="M4 6l5-3v14l-5 2zM9 3l7-2v13l-7 3z"/><path stroke="#333" stroke-dasharray="3 1" d="M10 1v18"/></svg><span>右视基准面</span></li>
   <li><svg viewBox="0 0 20 20"><path fill="none" stroke="#bbb" stroke-width="4" d="M4 1v15h15"/><path fill="none" stroke="#222" stroke-width="2" d="M4 2v14h14M2 5l2-3 2 3M15 14l3 2-3 2"/></svg><span>原点</span></li>
   <li><svg viewBox="0 0 20 20"><path stroke="#bbb" stroke-width="4" d="M1 19L19 1"/><path stroke="#2d7fae" stroke-width="2" stroke-dasharray="5 2" d="M1 19L19 1"/></svg><span>基准轴1</span></li>
   <li class="ex"><svg><use href="#revolve"/></svg><span>旋转1</span></li>
   <li class="ex"><svg><use href="#cutex"/></svg><span>切除-拉伸1</span></li>
   <li class="ex"><svg viewBox="0 0 20 20"><path fill="none" stroke="#8ccdf0" stroke-width="2" d="M2 2q16-3 16 1T5 7q13-3 13 1T5 12q13-3 13 2t-16 4M4 1v17"/></svg><span>螺旋线/涡状线1</span></li>
   <li class="ex"><b class="sel"><svg><use href="#cutsw"/></svg><span>切除-扫描1</span></b></li>
   <li><svg viewBox="0 0 20 20"><path fill="#5fb0d8" d="M0 6l6 4-6 4z"/><path fill="#eee" d="M6 0h8v2h-3v4H9V2H6zM20 6v8l-6-4zM6 20v-2h3v-4h2v4h3v2z"/></svg><span>阵列(圆周)1</span></li>
  </ul>
  <div class="rollback"></div>
  <div class="hscroll"><i></i></div>
  <button class="split" aria-label="收起"><i class="knob"></i></button>
 </aside>

 <section class="view">
  <svg class="model" viewBox="0 0 1568 1568" preserveAspectRatio="none">
   <g class="hid">
    <path d="M850 182C920 190 990 240 1055 385 1085 500 1107 600 1107 700 1105 850 1060 1000 985 1170 920 1260 860 1300 740 1320 680 1310 600 1260 560 1190 500 1080 470 900 465 760 470 600 500 480 560 400 620 290 740 180 850 182z"/>
    <ellipse cx="600" cy="727" rx="133" ry="185"/>
    <path d="M600 542L990 587M690 862L865 883M690 862L705 905 900 935M628 908L645 950 1025 993M628 908L905 930M640 925L905 945M560 910L640 910"/>
    <path d="M990 250C1070 300 1200 270 1290 205M1050 190C1080 250 1180 280 1300 215M1000 280C1100 290 1200 270 1320 235M930 190C1020 240 1120 210 1260 130M880 150C980 220 1100 170 1200 130M1000 285L1050 345 1130 330 1110 285"/>
    <path d="M1110 285C1120 345 1200 350 1370 290M1130 330C1150 385 1290 370 1390 315M1050 345C1150 365 1300 340 1400 340M1055 380C1180 380 1310 360 1410 345M1100 290L1095 345"/>
    <path d="M1060 412L1130 410 1165 430C1190 480 1290 470 1435 425M1070 430C1140 480 1290 470 1440 420M1090 455C1180 480 1320 450 1430 405M1115 515L1180 478C1230 510 1330 490 1425 480M1130 410L1145 470M1425 430L1428 480 1460 495M1095 520L1115 515"/>
    <path d="M1100 560L1165 572 1200 600C1300 605 1400 590 1475 573M1105 590C1250 610 1400 595 1475 580M1100 580C1250 585 1400 560 1465 545M1165 660L1200 638 1455 640 1480 655M1165 572V660M1200 600V638M1455 590V640M1107 683L1165 660"/>
    <path d="M1107 690L1485 695M1107 712L1485 720M1110 722L1165 735 1200 757 1458 755 1485 740M1165 735V805M1200 757V798L1458 805 1485 830M1165 805L1200 798M1458 755V805M1100 830L1165 805"/>
    <path d="M1100 825C1250 820 1400 835 1480 848M1095 850C1250 845 1400 865 1475 880M1090 870L1145 895 1175 915C1270 900 1380 915 1445 920L1475 905M1145 895L1135 980M1175 915L1170 940C1290 950 1380 950 1440 968L1455 990M1445 920L1435 975"/>
    <path d="M1085 940C1200 935 1350 950 1450 990M1065 960C1200 945 1350 965 1445 1005M1060 990L1130 980 1170 945M1060 975C1200 955 1350 990 1440 1025M1050 1020L1110 1050 1135 1075C1250 1045 1340 1065 1395 1080L1430 1065"/>
    <path d="M1030 1070C1180 1030 1300 1060 1395 1130M1010 1100C1100 1070 1250 1070 1390 1140M1000 1115L1075 1130 1110 1110C1170 1060 1290 1090 1390 1135M1090 1055L1075 1130M1395 1080L1380 1130M1020 1085C1150 1080 1280 1100 1385 1160"/>
    <path d="M985 1150L1045 1190 1055 1220C1110 1170 1230 1200 1325 1220L1365 1180M945 1195C1050 1130 1200 1180 1310 1255M930 1220C1050 1150 1180 1190 1320 1270M940 1180C1060 1150 1190 1170 1325 1240M925 1240L1010 1250 1045 1190M1325 1220L1310 1260"/>
    <path d="M905 1260C1000 1280 1110 1350 1200 1390M880 1300C980 1300 1060 1380 1130 1430M830 1300C930 1320 1000 1400 1060 1440M740 1320C840 1360 920 1420 990 1450M690 1310C760 1360 800 1420 830 1470M860 1300L760 1400M820 1300L700 1430M780 1320L660 1410M700 1330L780 1410M850 1410C900 1350 1050 1360 1130 1430"/>
    <path d="M470 60C560 110 700 130 790 130M380 70C500 180 650 200 720 185M300 215C400 270 560 270 650 250M275 225C370 300 470 330 590 325M210 345C330 400 450 450 550 440M195 360C310 420 430 460 545 425M160 410L190 330M240 262L275 210M120 560L135 490M105 740L98 655M100 895L95 820M130 1045L112 975M150 500C280 540 400 570 500 555M345 545L480 575M315 760L465 830"/>
    <path d="M150 1030C270 1000 400 1020 490 1060M380 900C420 910 450 940 475 970M200 1165C320 1110 450 1120 540 1150M200 1180C300 1140 430 1110 545 1165M215 1200L270 1300M280 1290C380 1220 500 1200 580 1225M300 1300C400 1230 500 1210 600 1250M380 1370C450 1300 560 1280 640 1310M440 1430C500 1340 600 1310 700 1330M470 1420C560 1340 650 1320 720 1360M560 1440L600 1390 700 1400M300 1310L370 1390M400 1400L490 1450M520 1450C580 1400 650 1400 740 1440"/>
    <path d="M750 60C800 130 900 140 1000 60M800 60C860 160 1000 170 1120 110M700 60C780 170 960 170 1080 90M560 60C640 130 760 140 850 60M620 60L720 130M900 50L830 150M960 50L880 170M1180 1410L1330 1260M1240 100L1290 200M1360 290L1420 400"/>
   </g>
   <g class="ink">
    <ellipse cx="978" cy="776" rx="510" ry="691"/>
    <path d="M430 55L410 62 320 147 295 205 268 205 222 262 210 315 188 332 152 405 148 450 135 480 105 555 107 598 90 650 85 735 92 772 85 810 92 890 102 905 103 970 125 1048 140 1045 155 1125 185 1190 205 1190 218 1250 265 1308 290 1305 305 1350 365 1397 395 1395 410 1430 490 1452 515 1455 545 1475 612 1475 635 1462 665 1470 730 1462 740 1480 825 1497 845 1475 860 1505 940 1512 975 1480 1010 1502 1065 1490 1100 1440 1120 1458 1205 1400 1225 1382 1260 1350 1310 1270 1325 1272 1375 1175 1400 1140 1437 1030 1455 990 1475 890 1482 830 1490 740 1488 610 1475 570 1465 490 1440 420 1420 410 1412 350 1380 285 1350 260 1330 215 1295 173 1265 165 1245 110 1165 110 1140 50"/>
    <path d="M320 147C410 160 440 175 480 200 540 230 590 220 620 190L650 170 720 185M295 200C380 250 430 300 490 302L515 295 535 270 575 262 635 280 655 255M268 205L288 218 268 262 222 262M268 262C350 285 430 325 470 326L515 317 575 375M575 262L535 330M515 295L515 317M288 218C350 250 400 285 450 298M410 62L480 60C520 110 560 165 640 165M600 190L655 255M470 60L510 95C600 140 700 120 760 150M520 50C560 100 640 130 790 130M640 50C700 120 760 130 830 100M760 50L820 100 870 130M900 50L830 110M940 50L965 80"/>
    <path d="M210 315C300 345 380 390 450 415L500 397 560 405M188 332C280 375 350 420 440 428M188 332L208 370 190 398 152 405M190 398C260 420 380 460 430 455L465 470 515 512M500 397L465 470M450 415L440 455M208 370C300 400 360 425 420 430"/>
    <path d="M148 450C250 485 380 520 440 540L510 520M135 475C250 510 350 535 440 550L505 548M135 480L152 505 148 550 105 555M148 550C250 580 350 600 395 605L425 630 480 660M410 565L395 605M440 550L425 630M152 505C230 525 300 550 440 560"/>
    <path d="M107 598L480 660M107 620L475 690M92 648L122 668 118 712 85 735M118 712L375 755 405 795M410 715L375 723V755M410 715V795M410 715L470 705M122 668L375 725M92 748L330 768 400 788 465 830M92 772C250 780 380 800 465 835"/>
    <path d="M85 810L120 832V880L92 893M120 832C200 838 300 850 378 888L440 862 468 858M92 893C200 885 320 885 378 920L385 945 420 965 480 968M102 905C200 890 300 895 350 910M102 925C200 915 300 920 378 935M378 888V925M412 880L418 960"/>
    <path d="M103 970L143 993 148 1033 125 1048M143 993C250 985 350 1000 408 1048L485 1015M140 1045C240 1030 350 1030 410 1080L425 1100 455 1115 525 1118M140 1068C240 1045 340 1040 400 1070M408 1048L412 1080M435 1045L455 1115"/>
    <path d="M155 1125L190 1142 200 1185 185 1190M190 1142C300 1120 400 1130 460 1193L530 1155M200 1190C290 1150 400 1160 460 1200L520 1250 580 1245M485 1188L520 1250M218 1250L265 1270 275 1300 265 1308M265 1270C350 1240 460 1230 545 1318L600 1275M275 1300C350 1260 460 1260 545 1320L600 1368 680 1345M560 1308L600 1365"/>
    <path d="M305 1350L360 1370 370 1395M360 1370C420 1330 520 1320 600 1368M380 1393C450 1335 540 1340 610 1395L700 1430M410 1430L480 1435C530 1390 580 1390 640 1410L720 1450M480 1430L490 1452M600 1445L635 1400M640 1410L740 1445M650 1380L690 1430M740 1480L770 1430 860 1450M825 1497L860 1450M860 1505L880 1460M890 1505V1465M940 1512L970 1470M975 1480L1010 1465V1502M1100 1440L1115 1455M610 1395L720 1440 780 1420M545 1440L600 1450M1205 1400L1225 1382"/>
    <path d="M1295 173V205L1345 275M1380 285L1375 310 1418 390M1440 420L1438 450 1462 520M1475 570L1472 600 1485 650M1375 1175L1310 1270M1437 1030L1400 1140"/>
    <ellipse cx="978" cy="772" rx="135" ry="187"/>
    <path d="M865 883L1065 905 1080 945 1025 993 1008 950 905 930M905 930L1080 948M905 932Q950 960 1008 955"/>
   </g>
   <g class="pick">
    <path class="cl" d="M789 748L970 1240"/><path d="M776 749h26M789 735v28"/>
    <path class="m" d="M808 1345C830 1270 900 1240 970 1240 1060 1235 1180 1310 1228 1362L1225 1382C1180 1340 1080 1270 970 1243M808 1345L830 1400 850 1410C890 1365 930 1375 960 1345M815 1330C860 1365 920 1365 960 1330M1000 1370C1080 1380 1110 1430 1175 1425L1200 1385"/>
    <path class="fat" d="M970 1250L972 1340 940 1482"/><path class="fat" d="M980 1240L1040 1302 1135 1337"/>
    <path class="dot" d="M1113 1357C1100 1400 1050 1450 945 1480"/>
   </g>
  </svg>

  <div class="hud">
   <button class="tb gh" aria-label="整屏显示"><svg><use href="#zoomfit"/></svg></button><button class="tb gh" aria-label="局部放大"><svg><use href="#lens"/></svg></button><button class="tb gh" aria-label="上一视图"><svg><use href="#prev"/></svg></button><button class="tb gh" aria-label="剖面视图"><svg><use href="#section"/></svg></button><button class="tb gh" aria-label="动态注解"><svg viewBox="0 0 40 40"><use href="#scope"/><path fill="#f7a21b" stroke="#b55" d="M12 1h14l-6 8h6L4 28l8-14H5z"/><path fill="#3d87b3" d="M17 38l8-24h4l8 24h-4l-3-8h-6l-3 8zM25 26h4l-2-7z"/></svg></button><button class="tb gh" aria-label="视图定向"><svg><use href="#orient"/></svg></button><button class="dd" aria-label="更多"></button><button class="tb gh" aria-label="显示样式"><svg><use href="#shade"/></svg></button><button class="dd" aria-label="更多"></button><button class="tb hon" aria-label="隐藏"><svg><use href="#eye"/></svg></button><button class="dd hon2" aria-label="更多"></button><button class="tb" aria-label="编辑外观"><svg><use href="#appear"/></svg></button><button class="tb" aria-label="应用布景"><svg><use href="#scene"/></svg></button><button class="dd" aria-label="更多"></button><button class="tb" aria-label="视图设定"><svg><use href="#monitor"/></svg></button><button class="dd" aria-label="更多"></button>
  </div>
  <div class="mdi">
   <button aria-label="左"><svg viewBox="0 0 30 30"><path fill="none" stroke="#999" stroke-width="2" d="M4 4h22v23H4z"/><path fill="#888" d="M3 2h24v4H3zM11 10v11l-6-5z"/></svg></button><button aria-label="右"><svg viewBox="0 0 30 30"><path fill="none" stroke="#999" stroke-width="2" d="M4 4h22v23H4z"/><path fill="#888" d="M3 2h24v4H3zM20 10v11l6-5z"/></svg></button><button aria-label="最小化"><svg viewBox="0 0 30 30"><path stroke="#999" stroke-width="4" d="M4 25h22"/></svg></button><button aria-label="还原"><svg><use href="#rest"/></svg></button><button aria-label="关闭"><svg><use href="#x"/></svg></button>
  </div>
  <div class="side"><button class="cur" aria-label="资源"><svg><use href="#home"/></svg></button><button aria-label="设计库"><svg><use href="#books"/></svg></button><button aria-label="文件探索器"><svg><use href="#folder"/></svg></button><button aria-label="视图调色板"><svg><use href="#pal"/></svg></button><button aria-label="外观"><svg><use href="#ball"/></svg></button><button aria-label="自定义属性"><svg><use href="#propt"/></svg></button></div>
  <svg class="triad" viewBox="0 0 70 50"><path stroke="#b3202a" stroke-width="4" d="M36 7L18 19"/><path fill="#d32f38" d="M20 13l4 8-14 5z"/><path stroke="#1c6b24" stroke-width="4" d="M38 9l7 20"/><path fill="#155a1c" d="M40 28l10-3-1 13z"/><path stroke="#1b1b8c" stroke-width="4" d="M36 7l15 2"/><circle cx="53" cy="9" r="5" fill="#1515c8"/><text x="1" y="32" fill="#d02020">X</text><text x="44" y="48" fill="#1c8c24">Y</text><text x="58" y="14" fill="#2020d0">Z</text></svg>
 </section>

 <aside class="right">
  <h1><svg class="i16" viewBox="0 0 20 20"><path fill="none" stroke="#222" stroke-width="3" d="M9 3l-6 7 6 7M18 3l-6 7 6 7"/></svg><span>SOLIDWORKS 资源</span><svg class="i16" viewBox="0 0 20 20"><circle cx="10" cy="10" r="8" fill="none" stroke="#222" stroke-width="3" stroke-dasharray="3 2"/><circle cx="10" cy="10" r="6" fill="#ddd" stroke="#222" stroke-width="2"/><circle cx="10" cy="10" r="2" fill="#222"/></svg><svg class="i16"><use href="#pin"/></svg></h1>
  <div class="res">
   <a class="welcome" href="#"><svg><use href="#home"/></svg>欢迎使用&nbsp; SOLIDWORKS</a>
   <section class="s1"><h2>SOLIDWORKS 工具<svg><use href="#up2"/></svg></h2>
    <a href="#"><svg><use href="#swn"/></svg>属性标签编制程序</a><a href="#"><svg><use href="#swr"/></svg>SOLIDWORKS Rx</a><a href="#"><svg><use href="#swr"/></svg>性能基准测试</a><a href="#"><svg viewBox="0 0 20 20"><rect x="1" y="1" width="18" height="18" rx="2" fill="#4a9cc8"/><path fill="none" stroke="#fff" stroke-width="2" d="M3 9q7-6 13-1M4 12q7 5 13 0"/><circle cx="10" cy="10" r="2" fill="#fff"/></svg>比较我的评分</a><a href="#"><svg viewBox="0 0 20 20"><path stroke="#ccc" stroke-width="4" stroke-dasharray="3 1" d="M1 3h15"/><path stroke="#5fb0d8" stroke-width="3" d="M1 16l7-6"/><path stroke="#ddd" stroke-width="2" d="M6 4l6 6"/><svg x="8" y="8" width="12" height="12"><use href="#sw"/></svg></svg>SOLIDWORKS 设置向导</a><a href="#"><svg viewBox="0 0 20 20"><svg width="13" height="13"><use href="#sw"/></svg><path fill="#eee" d="M5 7h8v11H5z"/><path fill="none" stroke="#3a9a3a" stroke-width="2" d="M6 14l2 2 4-4"/><circle cx="15" cy="11" r="3" fill="#aaa"/><path fill="#aaa" d="M10 20q0-6 5-6t5 6z"/></svg>我的产品</a>
   </section>
   <section class="s2"><h2>在线资源<svg><use href="#up2"/></svg></h2>
    <a href="#"><svg viewBox="0 0 20 20"><circle cx="10" cy="10" r="9" fill="#1d6390"/><ellipse cx="10" cy="5" rx="6" ry="3" fill="#7fb9db"/><path fill="none" stroke="#cde" d="M8 8l5 3-5 3zM2 11h3M15 11h3M8 17h4"/></svg>3DEXPERIENCE Marketplace</a><a href="#"><svg viewBox="0 0 20 20"><path fill="#ddd" stroke="#333" d="M1 3l6 3 4-1 8-1v5l-4 1-4 4-5-4-5-2z"/></svg>Partner Solutions</a>
   </section>
   <section><h2>订阅服务<svg><use href="#up2"/></svg></h2>
    <a href="#"><svg viewBox="0 0 20 20"><circle cx="8" cy="8" r="7" fill="#3d8ab8"/><path fill="#dfeee6" d="M3 4l5-1 1 4-4 3zM10 8l4-2v4z"/><svg x="7" y="7" width="13" height="13"><use href="#sw"/></svg></svg>订阅服务</a>
   </section>
  </div>
 </aside>

 <nav class="mtabs"><span class="vcr"><button aria-label="首"><svg viewBox="0 0 10 10"><path d="M2 1v8M8 1L4 5l4 4z"/></svg></button><button aria-label="前"><svg viewBox="0 0 10 10"><path d="M7 1L3 5l4 4z"/></svg></button><button aria-label="后"><svg viewBox="0 0 10 10"><path d="M3 1l4 4-4 4z"/></svg></button><button aria-label="末"><svg viewBox="0 0 10 10"><path d="M8 1v8M2 1l4 4-4 4z"/></svg></button></span><a class="cur" href="#">模型</a><a href="#">3D 视图</a><a href="#">运动算例 1</a></nav>
</main>

<footer class="status"><span>蜗轮28×1</span><svg class="i16 warn" viewBox="0 0 20 20"><path fill="#f8c030" stroke="#222" d="M7 1l7 12H1z"/><path stroke="#222" stroke-width="2" d="M7 5v4M7 10v2"/><path fill="none" stroke="#111" stroke-width="3" d="M12 14q5-3 4-9m-3 2l3-4 3 4"/><path stroke="#1d5f8a" stroke-width="2" stroke-dasharray="3 1" d="M2 17h17"/></svg><span class="unit">MMGS</span><i class="tri up"></i><svg class="i16" viewBox="0 0 20 20"><path fill="#ccc" stroke="#222" d="M1 6l8-4 10 7v5l-7 5L1 11z"/><path fill="none" stroke="#222" d="M1 6l10 7 8-4M7 5l5 3"/></svg></footer>

<div class="task">
 <div class="apps">
  <button aria-label="开始"><svg viewBox="0 0 30 30"><path fill="url(#win)" d="M1 1h13.500v13.500H1zM15.500 1H29v13.500H15.500zM1 15.500h13.500V29H1zM15.500 15.500H29V29H15.500z"/></svg></button>
  <button aria-label="任务视图"><svg viewBox="0 0 30 30"><path fill="#222" d="M2 9h22v20H2z"/><path fill="#f5f5f5" fill-opacity=".85" d="M9 1h21v20H9z"/><path fill="#bbb" d="M9 9h15v12H9z"/></svg></button>
  <button aria-label="桌面"><svg viewBox="0 0 30 30"><path fill="url(#scr)" stroke="#456" d="M1 4h28v19H1z"/><path fill="#667" d="M13 23h4v3h4v2H9v-2h4z"/></svg></button>
  <button class="run" aria-label="Edge"><svg viewBox="0 0 30 30"><circle cx="15" cy="15" r="14.500" fill="url(#edge)"/><path fill="url(#edge2)" d="M1 12Q4 0 16 0q14 1 14 13 0 7-8 7-6 0-4-4 2-7-5-8-8-1-12 4z"/><path fill="#d4e6f3" d="M17 13q-3 6 3 9 4 1 8-2-7 3-10-1-2-2-1-6z"/></svg></button>
  <button class="run" aria-label="文件"><svg viewBox="0 0 30 30"><path fill="#d9980f" d="M1 3h11l3 3v5H1z"/><path fill="#fccb45" d="M1 7l13-1h15v21H1z"/><path fill="#2277c8" d="M6 28v-4q0-3 3-3h12q3 0 3 3v4z"/></svg></button>
  <button class="run" aria-label="SOLIDWORKS"><svg viewBox="0 0 30 30"><path fill="#c9151e" stroke="#300" d="M1 6l15-5 13 4v15l-14 6-14-5z"/><path fill="#e8403f" d="M1 6l15-5 13 4-14 4z"/><path fill="none" stroke="#fff" stroke-width="2.500" d="M10 10H5v4h5v6H4M15 11l2 9 3-5 2 4 3-10"/><rect x="11" y="21" width="19" height="9" rx="1" fill="#111"/><text x="12" y="29" fill="#fff" font-size="8" font-weight="700">2023</text></svg></button>
  <button class="run" aria-label="录屏"><svg viewBox="0 0 30 30"><rect x="1" y="1" width="28" height="28" rx="4" fill="#0b2a4f" stroke="#197fa3" stroke-width="2"/><path fill="none" stroke="#fff" stroke-width="5" d="M21 10q-6-4-10 0t0 10 10 0"/><path stroke="#0b2a4f" d="M8 14h6M9 17h5"/></svg></button>
 </div>
 <div class="tray">
  <svg viewBox="0 0 20 20"><path d="M4 13l6-6 6 6"/></svg>
  <svg class="m1" viewBox="0 0 20 20"><path class="cn" d="M8 5V1h4v4h7v9h-7v5H8v-5H1V5zM4 8h4v3H4zM12 8h4v3h-4z"/></svg>
  <svg class="m2" viewBox="0 0 20 20"><rect x="1" y="1" width="18" height="18" rx="4" fill="#f0562a" stroke="none"/><path stroke="#fff" stroke-width="3" d="M15 6Q6 3 6 7t8 3-9 5"/></svg>
  <svg class="m3" viewBox="0 0 20 20"><path d="M1 8q9-8 18 0M4 11q6-6 12 0M7 14q3-3 6 0"/><circle cx="10" cy="16" r="1"/></svg>
  <svg class="m4" viewBox="0 0 20 20"><path d="M1 8h3l5-5v14l-5-5H1zM12 7q2 3 0 6M14 4q4 6 0 12M17 2q5 8 0 16"/></svg>
  <svg class="m4" viewBox="0 0 20 20"><path d="M1 6h16v9H1zM18 9v3"/><path fill="#222" d="M6 8h9v5H5zM3 1h3L5 4h3l-6 6 1-5H1z"/></svg>
  <time>13:27<br>2023-08-28</time>
  <svg class="m5" viewBox="0 0 20 20"><path d="M3 16h14M5 16V9q0-5 5-6M8 16q2 4 4 0M15 10v6M13 2h5l-5 5h5M8 8h4l-4 5h4"/></svg>
 </div>
</div>
</body>
</html>
```

FILE: styles.css
```css
* { box-sizing: border-box; }
body { margin: 0; min-height: 100vh; display: flex; flex-direction: column; background: #494949; color: #f0f0f0; font: 350 14px/19px "Noto Sans CJK SC", "Noto Sans", sans-serif; overflow-x: hidden; }
button { background: none; border: 0; padding: 0; margin: 0; color: inherit; font: inherit; display: flex; align-items: center; justify-content: center; flex: none; }
a { color: inherit; text-decoration: none; }
svg { flex: none; }
.defs { position: absolute; width: 0; height: 0; }
.i16 { width: 16px; height: 16px; }

/* icon paint */
.b { fill: var(--b, url(#gb)); stroke: var(--s, #12405c); }
.w { fill: var(--w, #f0f0f0); stroke: var(--s, #444); }
.g { fill: var(--g, #a8a8a8); stroke: var(--s, #555); }
.y { fill: var(--y, #f7cf2e); stroke: var(--s, #8a6a00); }
.n { fill: none; stroke: var(--s, #333); }
.k { fill: none; stroke: var(--k, #222); stroke-width: 2; }
.dim { --b: #5c5c5c; --w: #646464; --g: #5c5c5c; --y: #5c5c5c; --s: #787878; --k: #747474; }

.title { height: 61px; display: flex; align-items: center; border-top: 1px solid #bbb; border-bottom: 1px solid #bbb; flex: none; }
.logo { display: flex; align-items: center; gap: 4px; width: 146px; padding-left: 4px; font: italic 300 14px/20px "Open Sans", sans-serif; }
.logo b { font-weight: 700; }
.logo svg { width: 22px; height: 24px; }
.menus { display: flex; align-items: center; align-self: stretch; gap: 14px; width: 379px; border-right: 1px solid #888; white-space: nowrap; }
.quick { display: flex; position: relative; align-self: stretch; align-items: center; padding-left: 18px; }
.quick .tb { width: 52px; height: 53px; }
.quick .dd { height: 53px; }
.tag { position: absolute; width: 28px; height: 56px; right: 10px; top: 0; }
.doc { color: #b4b4b4; padding-left: 17px; white-space: nowrap; margin-right: auto; }
.search { display: flex; align-items: center; width: 252px; height: 29px; background: #fff; padding: 0 5px 0 7px; gap: 8px; flex: none; }
.search svg { width: 18px; height: 19px; }
.search input { flex: 1; min-width: 0; border: 0; padding: 0; font: 16px/24px "Noto Sans CJK SC", sans-serif; outline: 0; }
.search input::placeholder { color: #666; }
.search .tri { border-top-color: #777; }
.win { display: flex; padding: 0 5px 0 4px; }
.win button { width: 61px; }
.win svg { width: 30px; height: 30px; }
.tri { width: 0; height: 0; border: 5px solid transparent; border-top-color: #fff; border-bottom: 0; }
.tri.up { border-top: 0; border-bottom: 4px solid #fff; border-left-width: 4px; border-right-width: 4px; }

.bar { height: 52px; display: flex; align-items: center; border-bottom: 1px solid #999; flex: none; }
.second { height: 53px; border-bottom-color: #bbb; }
.tb { width: 47px; height: 46px; }
.tb svg { width: 38px; height: 38px; }
.dd { width: 21px; height: 46px; }
.dd::after { content: ""; border: 5px solid transparent; border-top-color: #fff; border-bottom: 0; }
.dd.off::after { border-top-color: #888; }
.on { background: #2b2b2b; border: 1px solid #000; }
.on2 { background: #333; border: 1px solid #111; border-left: 0; }
.soft { background: #5c5c5c; border: 1px solid #777; }
.sep { width: 8px; height: 42px; background: linear-gradient(#222, #222) 3px 0/1px 100% no-repeat, linear-gradient(#888, #888) 4px 0/1px 100% no-repeat; flex: none; }
.grip { width: 22px; height: 46px; flex: none; background: repeating-linear-gradient(#ddd 0 2px, #494949 2px 4px) 11px 0/2px 100% no-repeat, linear-gradient(#888, #888) 7px 0/1px 100% no-repeat; }
.grip.first { width: 14px; background: repeating-linear-gradient(#ddd 0 2px, #494949 2px 4px) 3px 0/2px 100% no-repeat; }
.end { width: 8px; align-self: stretch; border-right: 1px solid #999; }
.more { width: 18px; height: 24px; fill: none; stroke: #fff; stroke-width: 2; }
.combo { width: 98px; height: 46px; border: 1px solid #ddd; border-radius: 2px; appearance: none; background: #fafafa url("data:image/svg+xml,%3Csvg xmlns='http://www.w3.org/2000/svg' width='10' height='10'%3E%3Cpath d='M1 3l4 4 4-4' fill='none' stroke='%23aaa'/%3E%3C/svg%3E") 82px 17px no-repeat; flex: none; }

.ribbon { height: 141px; display: flex; align-items: flex-start; padding: 1px 0; flex: none; }
.ribbon section { display: flex; height: 138px; border-right: 1px solid #888; padding-left: 1px; }
.ribbon section:first-child { padding-left: 6px; }
.big { width: 52px; height: 138px; flex-direction: column; justify-content: flex-start; padding: 6px 4px 11px; }
.big svg { width: 36px; height: 36px; margin-bottom: 3px; }
.big span { text-align: center; word-break: break-all; }
.big .tri { margin-top: auto; }
.col { display: flex; flex-direction: column; gap: 8px; padding-top: 3px; padding-left: 7px; }
.col button { gap: 5px; height: 38px; justify-content: flex-start; white-space: nowrap; }
.col svg { width: 36px; height: 36px; }
.w148 { width: 148px; } .w115 { width: 115px; } .w86 { width: 86px; }
.w86 button { gap: 3px; }
.instant { width: 71px; background: #2b2b2b; border: 1px solid #000; padding: 5px 0 0; }
.fold { margin: 110px 17px 0 auto; }
.fold svg { width: 14px; height: 14px; }

.work { flex: 1; display: grid; grid-template-columns: 231px 1fr 277px; grid-template-rows: 28px 1fr 20px; min-height: 690px; }
.tabs { grid-area: 1 / 1 / 2 / 3; justify-self: start; display: flex; z-index: 2; font-size: 16px; line-height: 26px; white-space: nowrap; text-align: center; }
.tabs a { background: #333; border: solid #999; border-width: 1px 1px 1px 0; }
.tabs a.cur { background: #494949; border-top-color: #494949; }
.tabs .lat { font-size: 15px; }
.t56 { width: 56px; } .t84 { width: 84px; } .t136 { width: 136px; } .t154 { width: 155px; } .t188 { width: 187px; }

.left { grid-area: 2 / 1; position: relative; display: flex; flex-direction: column; min-width: 0; border-left: 1px solid #bbb; border-right: 1px solid #888; padding-right: 2px; }
.handle { height: 22px; margin: 4px 0; border: solid #888; border-width: 1px 0; display: flex; align-items: center; justify-content: center; flex: none; }
.knob { width: 8px; height: 8px; border-radius: 50%; background: #ddd; border: 2px solid #999; }
.ptabs { display: flex; height: 46px; border-top: 1px solid #888; position: relative; overflow: hidden; flex: none; }
.ptabs > button { width: 60px; background: #333; border: solid #888; border-width: 0 1px 1px 0; }
.ptabs > button.cur { background: #494949; border-bottom-color: #494949; }
.ptabs > button svg { width: 35px; height: 37px; }
.pscroll { position: absolute; right: 0; bottom: 1px; display: flex; gap: 2px; background: #aaa; }
.pscroll button { width: 23px; height: 23px; background: #f2f2f2; }
.pscroll svg { width: 10px; height: 10px; }
.filter { display: flex; align-items: center; height: 32px; margin: 0 3px 0 4px; border: 1px solid #888; background: #545454; padding-left: 2px; flex: none; }
.filter svg { width: 17px; height: 20px; }
.filter input { flex: 1; min-width: 0; background: none; border: 0; color: #fff; }
.root { height: 28px; display: flex; align-items: center; gap: 5px; padding-left: 3px; font-family: "Noto Sans", "Noto Sans CJK SC", sans-serif; font-size: 16px; white-space: nowrap; overflow: hidden; border-bottom: 4px solid #e5a82b; flex: none; }
.root svg { width: 18px; height: 20px; }
.tree { list-style: none; margin: -3px 0 0; padding: 0; font-family: "Noto Sans", "Noto Sans CJK SC", sans-serif; font-size: 16px; }
.tree li { height: 24px; display: flex; align-items: center; padding-left: 26px; white-space: nowrap; }
.tree svg { width: 18px; height: 18px; margin-right: 5px; }
.tree .ex::before { content: ""; border: 4px solid transparent; border-left: 5px solid #fff; border-right: 0; margin: 0 12px 0 -17px; }
.sel { display: flex; align-items: center; background: #0a78d7; font-weight: inherit; height: 23px; margin-left: -2px; padding: 0 5px 0 2px; }
.rollback { height: 4px; background: #3d8ab8; margin-bottom: auto; flex: none; }
.hscroll { height: 21px; background: #f0f0f0; padding: 8px 0 0 21px; margin-bottom: 5px; flex: none; }
.hscroll i { display: block; width: 133px; height: 6px; background: #868686; }
.split { position: absolute; left: 229px; top: 283px; width: 12px; height: 49px; background: #494949; border: 1px solid #888; border-left: 0; z-index: 2; }

.view { grid-area: 1 / 2 / 3 / 3; position: relative; overflow: hidden; background: radial-gradient(ellipse 70% 36% at 100% 34%, rgba(208, 215, 235, .7), transparent), linear-gradient(#fff 0, #fdfdfe 24%, #e4e7f0 56%, #edeff5 62%, #fff 72%, #f9f9fc); border-bottom: 1px solid #888; }
.model { position: absolute; left: 289px; top: 13px; width: 560px; height: 530px; fill: none; }
.model path, .model ellipse { vector-effect: non-scaling-stroke; stroke-linejoin: round; }
.hid { stroke: #222; stroke-width: 1; stroke-dasharray: 4 2; }
.ink { stroke: #000; stroke-width: 2; }
.pick { stroke: #3f9df5; stroke-width: 1; }
.pick .m { stroke-width: 1.500; }
.pick .fat { stroke-width: 7; stroke-linecap: round; }
.pick .dot { stroke-width: 3; stroke-dasharray: 3 4; }
.pick .cl { stroke-dasharray: 10 3 3 3; }
.hud { position: absolute; left: 401px; top: 31px; display: flex; }
.hud .tb { width: 46px; }
.hud .tb svg { width: 36px; height: 36px; }
.hud .dd { width: 20px; }
.hud .dd::after { border-top-color: #9a9a9a; }
.hud .dd.hon2::after { border-top-color: #555; }
.gh svg { opacity: .75; }
.hon { background: #bdbdbd; border: 1px solid #888; }
.hon2 { background: #e3e3e6; border: 1px solid #999; border-left: 0; }
.mdi { position: absolute; right: 7px; top: 13px; display: flex; color: #999; }
.mdi button { width: 46px; }
.mdi svg { width: 28px; height: 28px; }
.side { position: absolute; right: 0; top: 78px; border: 1px solid #888; border-right: 0; }
.side button { width: 56px; height: 50px; background: #333; border-bottom: 1px solid #888; }
.side button:last-child { border: 0; }
.side .cur { background: #b4b4b4; }
.side svg { width: 35px; height: 36px; }
.triad { position: absolute; left: 14px; bottom: 22px; width: 70px; height: 50px; font: 14px "Liberation Serif", serif; overflow: visible; }

.right { grid-area: 1 / 3 / 4 / 4; border-left: 1px solid #777; display: flex; flex-direction: column; font-size: 13px; min-width: 0; }
.right h1 { margin: 0; height: 24px; display: flex; align-items: center; background: #9c9c9c; border-bottom: 1px solid #111; font-size: 16px; line-height: 20px; padding: 0 4px 2px 8px; color: #222; gap: 4px; }
.right h1 span { flex: 1; text-align: center; color: #f0f0f0; }
.res { flex: 1; border-left: 4px solid #a5a5a5; padding: 30px 30px 0 11px; }
.res a { display: flex; align-items: center; gap: 5px; height: 32px; padding-left: 2px; }
.res a svg { width: 19px; height: 19px; }
.res section { border-top: 1px solid #888; }
.res h2 { display: flex; justify-content: space-between; align-items: center; margin: 0; height: 22px; font-size: 13px; line-height: 19px; padding: 0 5px 0 4px; }
.res h2 svg { width: 18px; height: 18px; }
.welcome { margin-bottom: 29px; }
.res section a:first-of-type { height: 32px; }
.s1 { height: 246px; }
.s2 { height: 118px; }
.res .s2 a:first-of-type { height: 35px; }

.mtabs { grid-area: 3 / 1 / 4 / 3; display: flex; font-size: 16px; line-height: 19px; }
.vcr { display: flex; padding-left: 2px; width: 82px; }
.vcr button { width: 20px; background: #b4b4cc; border: 1px solid #8c8ca6; }
.vcr svg { width: 11px; height: 12px; fill: #8e8ea8; stroke: #8e8ea8; }
.mtabs a { padding: 0 11px 0 9px; background: #333; border: solid #888; border-width: 0 1px 1px 0; white-space: nowrap; }
.mtabs a.cur { background: #494949; padding: 0 12px 0 16px; }
.mtabs a:last-child { padding: 0 20px 0 10px; }

.status { height: 23px; background: #969696; display: flex; align-items: center; padding: 3px 3px 0 1px; font-family: "Noto Sans", "Noto Sans CJK SC", sans-serif; font-size: 16px; line-height: 20px; flex: none; }
.warn { margin: 0 77px 0 auto; }
.unit { margin-right: 17px; }
.status .up { margin-right: 28px; }
.task { height: 60px; background: #d4e6f3; color: #222; display: grid; grid-template-columns: 1fr auto 1fr; align-items: center; flex: none; }
.apps { grid-column: 2; display: flex; margin-left: -56px; }
.apps button { width: 55px; height: 60px; position: relative; }
.apps svg { width: 30px; height: 30px; font-family: "Open Sans", sans-serif; }
.run::after { content: ""; position: absolute; bottom: 6px; width: 8px; height: 4px; border-radius: 2px; background: #788896; }
.tray { display: flex; align-items: center; justify-content: flex-end; padding-right: 26px; }
.tray svg { width: 20px; height: 20px; fill: none; stroke: #222; stroke-width: 1.500; }
.tray .cn { stroke-width: 1; }
.m1 { margin-left: 20px; } .m2 { margin-left: 28px; } .m3 { margin-left: 27px; } .m4 { margin-left: 10px; } .m5 { margin-left: 10px; }
.tray time { text-align: right; font-size: 15px; line-height: 20px; margin-left: 20px; }
```
